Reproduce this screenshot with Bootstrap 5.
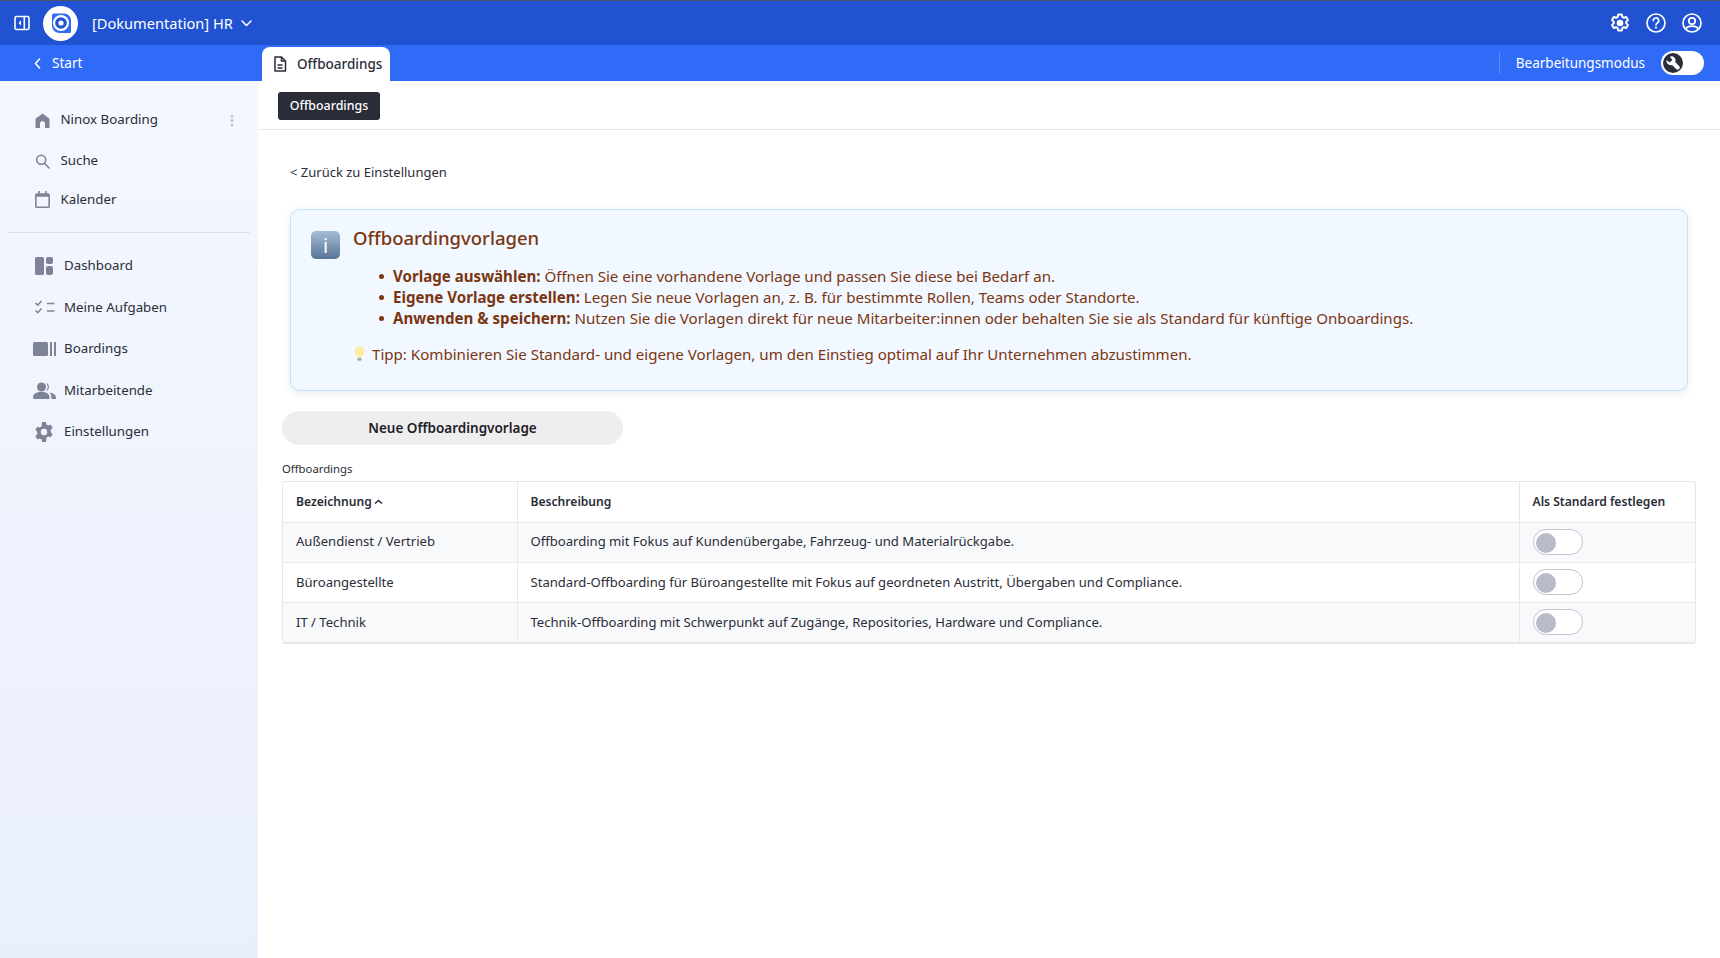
<!DOCTYPE html>
<html lang="de">
<head>
<meta charset="utf-8">
<title>Offboardings</title>
<link href="https://cdn.jsdelivr.net/npm/bootstrap@5.3.0/dist/css/bootstrap.min.css" rel="stylesheet">
<style>
html,body{height:100%;overflow:hidden}
body{font-family:"Noto Sans",sans-serif;font-size:13.3px;color:#2b2d38;background:#fff}
.app-shell{height:958px;display:flex;flex-direction:column}
.top-strip{height:45px;background:#2152d2;border-top:1px solid #4d5565;color:#fff;padding:0 18px 0 14px;flex:none}
.logo-disc{width:35px;height:35px;border-radius:50%;background:#fff;margin-left:13px;margin-right:14px}
.work-name{font-size:14.6px;padding-top:1px}
.sub-strip{height:36px;background:#2f6bf6;color:#fff;flex:none}
.start-cell{width:258px;padding-left:34px;padding-top:1px;gap:11px;font-size:13.6px}
.tab-pill{width:128px;height:34px;margin-top:2px;margin-left:4px;background:#fff;color:#2b2d38;border-radius:8px 8px 0 0;padding-left:11px;gap:10px;font-weight:500;font-size:13.5px}
.mode-cell{height:22px;border-left:1px solid #5b8bf8;padding-left:16px;margin-right:16px;font-size:13.5px;gap:16px}
.mode-switch{width:43px;height:24px;border-radius:12px;background:#fff;padding:2px}
.mode-knob{width:20px;height:20px;border-radius:50%;background:#2a2c37}
.body-row{flex:1;min-height:0}
.side-pane{width:258px;flex:none;background:linear-gradient(#f4f7fe,#e9effc);padding-top:20px}
.side-link{display:flex;align-items:center;color:#2b2d38;text-decoration:none;font-size:13.3px}
.side-top{height:38.4px;padding:0 24px 0 35px;gap:10.5px}
.side-first{margin-bottom:2.5px}
.side-top svg:first-child{width:15px;flex:none}
.side-rule{height:1px;background:#d9dee9;margin:13px 8px 13px 8px}
.side-main{height:41.4px;padding-left:33px;gap:8px}
.side-main svg{flex:none}
.kebab{margin-left:auto}
.main-pane{flex:1;min-width:0}
.crumb-bar{height:49px;border-bottom:1px solid #e7e8ec;padding:11px 0 0 20px}
.crumb-chip{display:inline-block;width:102px;height:28px;line-height:28px;text-align:center;background:#2a2c37;color:#fff;border-radius:3px;font-size:12.4px;font-weight:500}
.page-body{padding:31px 24px 0 24px}
.back-line{color:#2b2d38;margin-left:8px;height:22px;line-height:22px;font-size:13px;text-decoration:none;display:block}
.hint-box{margin:26px 8px 0 8px;height:182px;background:#f2f8ff;border:1px solid #c5e2fa;border-radius:10px;box-shadow:0 2px 8px rgba(60,90,130,.12);padding:15px 20px;color:#7a3612;font-size:15.1px;gap:13px}
.hint-icon{width:29px;height:28px;border-radius:5px;background:linear-gradient(#a4bdd8,#587495);color:#fff;margin-top:6px;flex:none;font-size:20px;line-height:29px;text-align:center}
.hint-title{font-size:18.5px;font-weight:500;line-height:26px;margin-bottom:14.5px}
.hint-list{margin:0 0 14px 0;padding-left:40px;line-height:21.2px;list-style:none}
.hint-list li{position:relative}
.hint-list li::before{content:"";position:absolute;left:-14px;top:8px;width:5px;height:5px;border-radius:50%;background:#7a3612}
.hint-list strong{font-weight:700}
.hint-tip{line-height:22px;gap:6px}
.new-btn{display:block;width:341px;height:34px;margin-top:20px;border:0;border-radius:17px;background:#eeeeef;color:#1f2027;font-weight:600;font-size:13.5px;padding:0}
.tbl-cap{font-size:11.3px;margin-top:16px;line-height:16px;height:16px;color:#2b2d38}
.data-wrap{width:1414px;margin-top:4px;border:1px solid #e7e8ee;border-bottom-width:2px;border-radius:3px;overflow:hidden}
.data-grid{width:100%;margin:0;table-layout:fixed;border-collapse:collapse;font-size:13.08px;color:#2b2d38}
.data-grid th,.data-grid td{padding:0 13px;vertical-align:middle;border-right:1px solid #e7e8ee;border-bottom:1px solid #e7e8ee;height:40.3px}
.data-grid th:last-child,.data-grid td:last-child{border-right:0}
.data-grid tr:last-child td{border-bottom:0;height:39px}
.data-grid th{font-weight:600;font-size:12.1px;height:40px}
.data-grid tbody tr:nth-child(odd) td{background:#f8f9fb}
.col-name{width:234px}
.col-desc{width:1002px}
.sort-caret{margin-left:2px;vertical-align:1px}
.off-switch{display:block;width:50px;height:26px;border:1px solid #c3c5d2;border-radius:13px;background:#fff;padding:2.5px}
.off-knob{display:block;width:20px;height:20px;border-radius:50%;background:#b9bbc9}
</style>
</head>
<body>
<div class="app-shell">
  <div class="top-strip d-flex align-items-center">
    <svg width="16" height="16" viewBox="0 0 16 16" fill="none"><rect x="1" y="1.5" width="14" height="13" rx="1.5" stroke="#fff" stroke-width="1.6"/><rect x="9.5" y="2" width="1.6" height="12" fill="#fff"/><path d="M7 5.2 4.6 8 7 10.8Z" fill="#fff"/></svg>
    <div class="logo-disc d-flex align-items-center justify-content-center">
      <svg width="22" height="22" viewBox="0 0 22 22"><path d="M4 1.5h10a7 7 0 0 1 7 7v11a1.5 1.5 0 0 1-1.500 1.500H9a8 8 0 0 1-7-7V3.500a2 2 0 0 1 2-2Z" fill="#2f6bf6"/><circle cx="11" cy="11" r="8" fill="#fff"/><circle cx="11" cy="11" r="5.800" fill="#2152d2"/><circle cx="11" cy="11" r="2.600" fill="#fff"/></svg>
    </div>
    <span class="work-name">[Dokumentation] HR</span>
    <svg class="ms-2" width="11" height="7" viewBox="0 0 11 7" fill="none"><path d="M1 1l4.500 4.500L10 1" stroke="#fff" stroke-width="1.5" stroke-linecap="round" stroke-linejoin="round"/></svg>
    <div class="ms-auto d-flex align-items-center gap-3">
      <svg width="20" height="20" viewBox="0 0 20 20" fill="none" stroke="#fff" stroke-width="2" stroke-linejoin="round"><path d="M8.200 1.500h3.600l.5 2.400 1.600.9 2.300-.8 1.800 3.100-1.800 1.600v1.600l1.800 1.600-1.800 3.100-2.300-.8-1.600.9-.5 2.400H8.200l-.5-2.400-1.600-.9-2.300.8-1.800-3.100 1.800-1.600V8.700L2 7.100l1.800-3.100 2.300.8 1.600-.9Z"/><circle cx="10" cy="10" r="2.300" fill="#fff"/></svg>
      <svg width="20" height="20" viewBox="0 0 20 20" fill="none" stroke="#fff" stroke-width="1.7"><circle cx="10" cy="10" r="9"/><path d="M7.300 7.600a2.700 2.700 0 1 1 4 2.400c-.9.500-1.300 1-1.300 2" stroke-linecap="round"/><circle cx="10" cy="14.600" r=".7" fill="#fff" stroke-width="1"/></svg>
      <svg width="20" height="20" viewBox="0 0 20 20" fill="none" stroke="#fff" stroke-width="1.7"><circle cx="10" cy="10" r="9"/><circle cx="10" cy="8" r="3.200"/><path d="M3.800 15.400c1.600-1.600 3.600-2.200 6.200-2.200s4.600.6 6.200 2.200"/></svg>
    </div>
  </div>
  <div class="sub-strip d-flex">
    <div class="start-cell d-flex align-items-center">
      <svg width="7" height="11" viewBox="0 0 7 11" fill="none"><path d="M5.500 1 1.500 5.500l4 4.500" stroke="#fff" stroke-width="1.6" stroke-linecap="round" stroke-linejoin="round"/></svg>
      <span>Start</span>
    </div>
    <div class="tab-pill d-flex align-items-center">
      <svg width="14" height="16" viewBox="0 0 14 16" fill="none" stroke="#2b2d38" stroke-width="1.5"><path d="M2 1h6.500L12.500 5v10H2Z" stroke-linejoin="round"/><path d="M8.500 1v4h4M4.500 9h5M4.500 12h5"/></svg>
      <span>Offboardings</span>
    </div>
    <div class="ms-auto d-flex align-items-center">
      <div class="mode-cell d-flex align-items-center">
        <span>Bearbeitungsmodus</span>
        <div class="mode-switch"><div class="mode-knob d-flex align-items-center justify-content-center">
          <svg width="14" height="14" viewBox="0 0 14 14"><g transform="translate(14 0) scale(-1 1)"><path d="M13.300 4 10.500 6.600 7.600 4 10.200.8A4 4 0 0 0 4.800 6L.9 10a2 2 0 0 0 3 2.900L8 8.900A4 4 0 0 0 13.300 4Z" fill="#fff"/></g></svg>
        </div></div>
      </div>
    </div>
  </div>
  <div class="body-row d-flex">
    <nav class="side-pane">
      <a class="side-link side-top side-first" href="#">
        <svg width="15" height="15" viewBox="0 0 14 15"><path d="M7 .5 14 5.700V15H9.500v-4.500a2.500 2.500 0 0 0-5 0V15H0V5.700Z" fill="#7f8398"/></svg>
        <span>Ninox Boarding</span>
        <svg class="kebab" width="4" height="13" viewBox="0 0 4 13"><circle cx="2" cy="2" r="1.5" fill="#c3c6d3"/><circle cx="2" cy="6.500" r="1.5" fill="#c3c6d3"/><circle cx="2" cy="11" r="1.5" fill="#c3c6d3"/></svg>
      </a>
      <a class="side-link side-top" href="#">
        <svg width="15" height="15" viewBox="0 0 14 15" fill="none" stroke="#7f8398" stroke-width="1.6"><circle cx="5.700" cy="5.700" r="4.500"/><path d="M9 9.200 13.500 14" stroke-linecap="round"/></svg>
        <span>Suche</span>
      </a>
      <a class="side-link side-top" href="#">
        <svg width="15" height="17" viewBox="0 0 14 16"><path d="M3 0h1.500v2h5V0H11v2h1.500A1.500 1.500 0 0 1 14 3.500v11a1.500 1.500 0 0 1-1.500 1.500h-11A1.500 1.500 0 0 1 0 14.500v-11A1.500 1.500 0 0 1 1.500 2H3Zm-1.500 5.500v9h11v-9Z" fill="#7f8398"/></svg>
        <span>Kalender</span>
      </a>
      <div class="side-rule"></div>
      <a class="side-link side-main" href="#">
        <svg width="23" height="20" viewBox="0 0 23 20" fill="#7f8398"><rect x="2" y="1" width="9" height="18" rx="1.5"/><rect x="13" y="1" width="7" height="7" rx="2"/><rect x="13" y="10" width="7" height="9" rx="2"/></svg>
        <span>Dashboard</span>
      </a>
      <a class="side-link side-main" href="#">
        <svg width="23" height="20" viewBox="0 0 23 20" fill="none" stroke="#7f8398" stroke-width="1.6"><path d="M2.500 5l2.200 2.200L8.500 3M2.500 12.500l2.200 2.200 3.800-4.200M14 5.500h7.500M14 13h7.500"/></svg>
        <span>Meine Aufgaben</span>
      </a>
      <a class="side-link side-main" href="#">
        <svg width="23" height="20" viewBox="0 0 23 20" fill="#7f8398"><rect x="0" y="3" width="15" height="14" rx="1.5"/><rect x="17" y="3" width="2" height="14"/><rect x="21" y="3" width="2" height="14"/></svg>
        <span>Boardings</span>
      </a>
      <a class="side-link side-main" href="#">
        <svg width="23" height="20" viewBox="0 0 23 20" fill="#7f8398"><circle cx="8.500" cy="6" r="4.500"/><path d="M0 16.500c0-4 3.500-5.500 8.500-5.500s8 1.500 8 5.500V18H1.500A1.500 1.500 0 0 1 0 16.500Z"/><path d="M13 1.800a4.500 4.500 0 0 1 0 8.400 6 6 0 0 0 0-8.400ZM16.500 11.500c3.500.5 6.500 2 6.500 5.500v1h-4.500c0-3-.4-5-2-6.500Z"/></svg>
        <span>Mitarbeitende</span>
      </a>
      <a class="side-link side-main" href="#">
        <svg width="23" height="20" viewBox="0 0 23 20"><path transform="translate(1 0)" fill-rule="evenodd" d="M8 0h4l.5 2.600 1.700 1 2.500-.9 2 3.400-2 1.700v2.400l2 1.700-2 3.400-2.500-.9-1.700 1L12 20H8l-.5-2.600-1.700-1-2.500.9-2-3.400 2-1.700V9.800l-2-1.700 2-3.400 2.500.9 1.700-1ZM10 6.800a3.200 3.200 0 1 0 0 6.400 3.200 3.200 0 0 0 0-6.400Z" fill="#7f8398"/></svg>
        <span>Einstellungen</span>
      </a>
    </nav>
    <main class="main-pane">
      <div class="crumb-bar"><span class="crumb-chip">Offboardings</span></div>
      <div class="page-body">
        <a class="back-line" href="#">&lt; Zurück zu Einstellungen</a>
        <div class="hint-box d-flex">
          <div class="hint-icon">i</div>
          <div class="flex-grow-1">
            <div class="hint-title">Offboardingvorlagen</div>
            <ul class="hint-list">
              <li><strong>Vorlage auswählen:</strong> Öffnen Sie eine vorhandene Vorlage und passen Sie diese bei Bedarf an.</li>
              <li><strong>Eigene Vorlage erstellen:</strong> Legen Sie neue Vorlagen an, z. B. für bestimmte Rollen, Teams oder Standorte.</li>
              <li><strong>Anwenden &amp; speichern:</strong> Nutzen Sie die Vorlagen direkt für neue Mitarbeiter:innen oder behalten Sie sie als Standard für künftige Onboardings.</li>
            </ul>
            <div class="hint-tip d-flex align-items-center">
              <svg width="13" height="16" viewBox="0 0 13 16"><path d="M6.500 .5a5 5 0 0 1 3 9c-.6.5-.9 1.200-1 2H4.500c-.1-.8-.4-1.500-1-2a5 5 0 0 1 3-9Z" fill="#fbeea2"/><rect x="4.500" y="11.700" width="4" height="3" rx="1" fill="#a6a8ad"/></svg>
              <span>Tipp: Kombinieren Sie Standard- und eigene Vorlagen, um den Einstieg optimal auf Ihr Unternehmen abzustimmen.</span>
            </div>
          </div>
        </div>
        <button class="new-btn" type="button">Neue Offboardingvorlage</button>
        <div class="tbl-cap">Offboardings</div>
        <div class="data-wrap">
          <table class="data-grid">
            <colgroup><col class="col-name"><col class="col-desc"><col></colgroup>
            <thead><tr>
              <th>Bezeichnung<svg class="sort-caret" width="9" height="6" viewBox="0 0 9 6" fill="none"><path d="M1 4.500 4.500 1.500 8 4.500" stroke="#2b2d38" stroke-width="1.5"/></svg></th>
              <th>Beschreibung</th>
              <th>Als Standard festlegen</th>
            </tr></thead>
            <tbody>
              <tr><td>Außendienst / Vertrieb</td><td>Offboarding mit Fokus auf Kundenübergabe, Fahrzeug- und Materialrückgabe.</td><td><span class="off-switch"><span class="off-knob"></span></span></td></tr>
              <tr><td>Büroangestellte</td><td>Standard-Offboarding für Büroangestellte mit Fokus auf geordneten Austritt, Übergaben und Compliance.</td><td><span class="off-switch"><span class="off-knob"></span></span></td></tr>
              <tr><td>IT / Technik</td><td>Technik-Offboarding mit Schwerpunkt auf Zugänge, Repositories, Hardware und Compliance.</td><td><span class="off-switch"><span class="off-knob"></span></span></td></tr>
            </tbody>
          </table>
        </div>
      </div>
    </main>
  </div>
</div>
<script src="https://cdn.jsdelivr.net/npm/bootstrap@5.3.0/dist/js/bootstrap.bundle.min.js"></script>
</body>
</html>
